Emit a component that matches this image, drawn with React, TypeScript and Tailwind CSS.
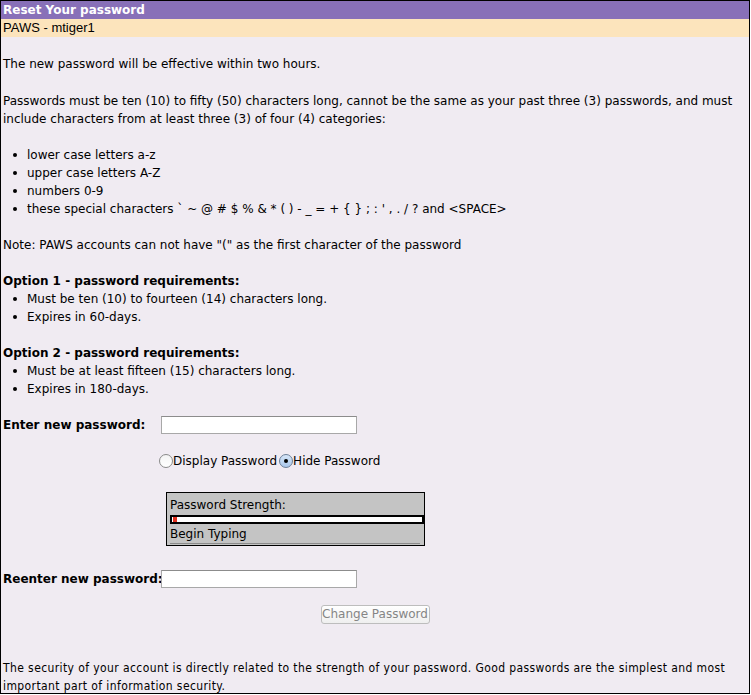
const body = "font-['DejaVu_Sans',Verdana,sans-serif] text-[12px] leading-[18px] text-black";

const Bullet = ({ children }: { children: React.ReactNode }) => (
  <div className="flex items-center">
    <span className="ml-[10px] mr-[10px] h-[4px] w-[4px] rounded-full bg-black" />
    <span>{children}</span>
  </div>
);

const Radio = ({ checked, label }: { checked?: boolean; label: string }) => (
  <label className="flex items-center">
    <span
      className={`flex h-[14px] w-[14px] items-center justify-center rounded-full border ${
        checked
          ? "border-[#6b7f99] bg-gradient-to-b from-[#d6e6f8] to-[#a9c6ea]"
          : "border-[#8a8a8a] bg-gradient-to-b from-[#f4f4f4] to-[#ffffff]"
      }`}
    >
      {checked && <span className="h-[4px] w-[4px] rounded-full bg-black" />}
    </span>
    <span>{label}</span>
  </label>
);

export default function App() {
  return (
    <div className={`h-[694px] w-[750px] border border-black bg-[#f0ebf2] ${body}`}>
      <div className="h-[18px] bg-[#8870b8] px-[2px] font-bold leading-[18px] text-white">
        Reset Your password
      </div>
      <div className="h-[18px] bg-[#fce4bc] px-[2px] font-['Liberation_Sans',Arial,sans-serif] text-[13px] leading-[18px]">
        PAWS - mtiger1
      </div>

      <div className="px-[2px]">
        <p className="mt-[18px]">The new password will be effective within two hours.</p>
        <p className="mt-[19px]">
          Passwords must be ten (10) to fifty (50) characters long, cannot be the same as your past three (3) passwords, and must
          include characters from at least three (3) of four (4) categories:
        </p>
        <div className="mt-[18px]">
          <Bullet>lower case letters a-z</Bullet>
          <Bullet>upper case letters A-Z</Bullet>
          <Bullet>numbers 0-9</Bullet>
          <Bullet>
            these special characters ` ~ @ # $ % &amp; * ( ) - _ = + {"{"} {"}"} ; : ' , . / ? and &lt;SPACE&gt;
          </Bullet>
        </div>
        <p className="mt-[18px]">Note: PAWS accounts can not have "(" as the first character of the password</p>

        <div className="mt-[18px]">
          <div className="font-bold">Option 1 - password requirements:</div>
          <Bullet>Must be ten (10) to fourteen (14) characters long.</Bullet>
          <Bullet>Expires in 60-days.</Bullet>
        </div>
        <div className="mt-[18px]">
          <div className="font-bold">Option 2 - password requirements:</div>
          <Bullet>Must be at least fifteen (15) characters long.</Bullet>
          <Bullet>Expires in 180-days.</Bullet>
        </div>
      </div>

      <div className="mt-[18px] flex h-[18px] items-center">
        <div className="w-[160px] pl-[2px] font-bold">Enter new password:</div>
        <input
          type="password"
          className="h-[18px] w-[196px] border border-[#a8a8a8] border-t-[#8c8c8c] bg-white outline-none"
        />
      </div>

      <div className="mt-[18px] flex h-[18px] items-center gap-[2px] pl-[158px]">
        <Radio label="Display Password" />
        <Radio checked label="Hide Password" />
      </div>

      <div className="ml-[165px] mt-[22px] h-[54px] w-[259px] border border-black bg-[#c4c4c4] pl-[3px] pt-[3px]">
        <div className="leading-[18px]">Password Strength:</div>
        <div className="mt-[1px] h-[9px] border-2 border-black bg-white">
          <div className="ml-[1px] h-[5px] w-[4px] bg-[#e0301e]" />
        </div>
        <div className="mt-[1px] leading-[18px]">Begin Typing</div>
        <div className="mr-[4px] h-[1px] bg-[#8a8a8a]" />
      </div>

      <div className="mt-[24px] flex h-[18px] items-center">
        <div className="w-[160px] whitespace-nowrap pl-[2px] font-bold">Reenter new password:</div>
        <input
          type="password"
          className="h-[18px] w-[196px] border border-[#a8a8a8] border-t-[#8c8c8c] bg-white outline-none"
        />
      </div>

      <div className="mt-[17px] flex justify-center">
        <button
          disabled
          className="h-[19px] w-[109px] rounded-[3px] border border-[#bdbdbd] bg-gradient-to-b from-[#ffffff] to-[#efefef] text-[12px] leading-[17px] text-[#858585]"
        >
          Change Password
        </button>
      </div>

      <p className="mt-[35px] px-[2px] font-['DejaVu_Sans_Condensed','DejaVu_Sans',sans-serif] tracking-[0.4px]">
        The security of your account is directly related to the strength of your password. Good passwords are the simplest and most
        important part of information security.
      </p>
    </div>
  );
}
